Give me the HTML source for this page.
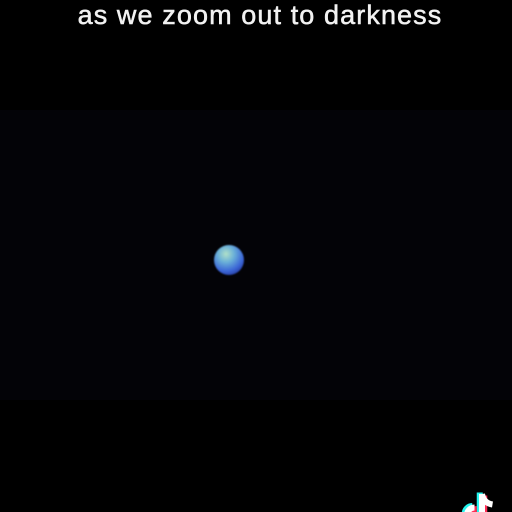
<!DOCTYPE html>
<html><head><style>
html,body{margin:0;padding:0;background:#000;width:512px;height:512px;overflow:hidden;}
body{position:relative;}
.vid{position:absolute;left:0;top:110px;width:512px;height:290px;background:#030307;}
.t{position:absolute;left:4px;width:512px;top:0px;text-align:center;color:#f2f2f2;font-family:"Liberation Sans",sans-serif;font-size:27px;letter-spacing:1.1px;-webkit-text-stroke:0.5px #f2f2f2;white-space:nowrap;}
.e{position:absolute;left:214px;top:245px;width:30px;height:30px;border-radius:50%;
background:radial-gradient(circle at 40% 30%,#b0e0c8 0%,#6ab0d8 30%,#3b66d6 62%,#1f2e90 88%,rgba(0,0,30,0) 100%);filter:blur(0.8px);}
svg{position:absolute;left:455px;top:488px;}
</style></head><body>
<div class="vid"></div>
<div class="t">as we zoom out to darkness</div>
<div class="e"></div>
<svg width="50" height="24" viewBox="0 0 50 24">
<g transform="scale(1.5)">
<path d="M18 4 V18 a5 5 0 1 1 -5 -5" fill="none" stroke="#25f4ee" stroke-width="4" transform="translate(-1.5,-1)"/>
<path d="M18 4 V18 a5 5 0 1 1 -5 -5" fill="none" stroke="#fe2c55" stroke-width="4" transform="translate(1.5,1)"/>
<path d="M18 4 V18 a5 5 0 1 1 -5 -5 M18 4 q1 6 7 7" fill="none" stroke="#fff" stroke-width="4"/>
</g>
</svg>
</body></html>
